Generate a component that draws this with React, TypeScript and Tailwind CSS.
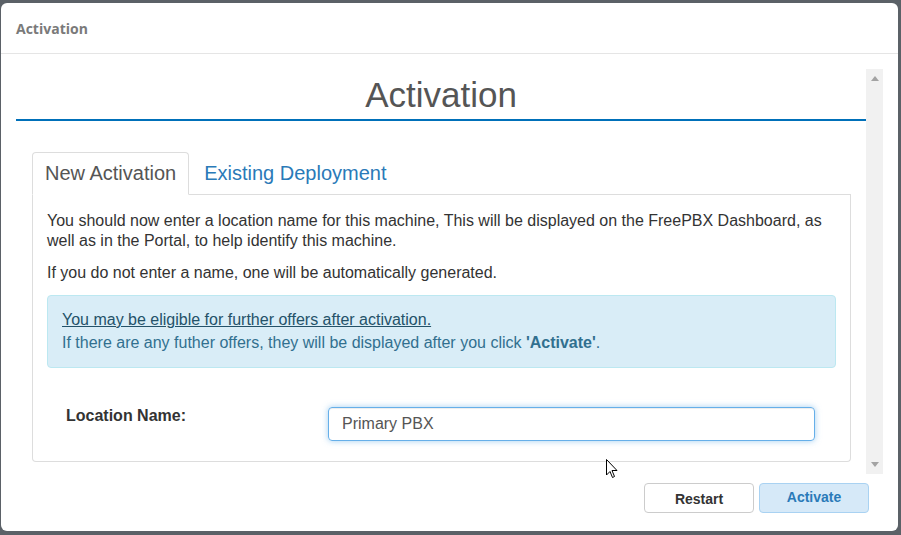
import React from "react";

export default function App() {
  return (
    <div className="relative w-[901px] h-[535px] bg-[#5b6167] pt-[3px] pl-[1px] pr-[3px] pb-[4px] overflow-hidden">
      <div className="bg-white rounded-[6px] h-full flex flex-col overflow-hidden" style={{ fontFamily: '"Liberation Sans", Arial, sans-serif' }}>
        {/* header */}
        <div className="h-[51px] shrink-0 border-b border-[#e5e5e5] px-[15px] flex items-center">
          <span className="text-[14px] font-bold text-[#7a7a7a]" style={{ fontFamily: '"Open Sans", sans-serif' }}>
            Activation
          </span>
        </div>
        {/* body */}
        <div className="px-[15px] pt-[15px] shrink-0">
          <div className="h-[405px] flex">
            <div className="flex-1 min-w-0">
              <h1 className="mt-[6px] pb-[4px] text-center text-[35px] leading-[40px] text-[#555] border-b-2 border-[#0070b9]">
                Activation
              </h1>
              <div className="mt-[31px] ml-[16px] mr-[15px]">
                <div className="flex border-b border-[#ddd]">
                  <div className="-mb-px border border-[#ddd] border-b-white rounded-t-[4px] bg-white px-[12px] pt-[6px] pb-[7px] text-[20px] leading-[28px] text-[#555]">
                    New Activation
                  </div>
                  <div className="ml-[3px] px-[12px] pt-[7px] pb-[7px] text-[20px] leading-[28px] text-[#2a7ab8]">
                    Existing Deployment
                  </div>
                </div>
                <div className="border border-t-0 border-[#ddd] rounded-b-[4px] px-[14px] pt-[16px] pb-[20px] text-[16px] leading-[20px] text-[#333]">
                  <p>
                    You should now enter a location name for this machine, This will be displayed on the FreePBX Dashboard, as well as in the Portal, to help identify this machine.
                  </p>
                  <p className="mt-[12px]">If you do not enter a name, one will be automatically generated.</p>
                  <div className="mt-[12px] bg-[#d9edf7] border border-[#bce8f1] rounded-[4px] px-[14px] pt-[12px] pb-[13px] text-[#31708f] leading-[23px]">
                    <div>
                      <span className="underline text-[#245269]">You may be eligible for further offers after activation.</span>
                    </div>
                    <div>
                      If there are any futher offers, they will be displayed after you click <b>'Activate'</b>.
                    </div>
                  </div>
                  <div className="mt-[39px] pl-[19px] pr-[21px] flex items-start">
                    <label className="w-[262px] shrink-0 font-bold leading-[18px]">Location Name:</label>
                    <div className="flex-1 h-[34px] border border-[#66afe9] rounded-[4px] px-[13px] flex items-center text-[#555] shadow-[inset_0_1px_1px_rgba(0,0,0,0.075),0_0_6px_rgba(102,175,233,0.6)]">
                      Primary PBX
                    </div>
                  </div>
                </div>
              </div>
            </div>
            {/* scrollbar */}
            <div className="w-[17px] shrink-0 bg-[#f1f1f1] flex flex-col justify-between items-center py-[7px]">
              <svg width="8" height="5" viewBox="0 0 8 5"><path d="M0 5 L4 0 L8 5 Z" fill="#a3a3a3" /></svg>
              <svg width="8" height="5" viewBox="0 0 8 5"><path d="M0 0 L8 0 L4 5 Z" fill="#a3a3a3" /></svg>
            </div>
          </div>
        </div>
        {/* footer */}
        <div className="flex justify-end gap-[5px] pt-[9px] pr-[29px]">
          <button className="w-[110px] h-[30px] border border-[#ccc] rounded-[4px] bg-white text-[14px] font-bold text-[#333] pt-[2px]">
            Restart
          </button>
          <button className="w-[110px] h-[30px] border border-[#a9d2f2] rounded-[4px] bg-[#d6e9f8] text-[14px] font-bold text-[#2a7ab8] pb-[2px]">
            Activate
          </button>
        </div>
      </div>
      {/* mouse cursor */}
      <svg className="absolute left-[606px] top-[459px]" width="13" height="20" viewBox="0 0 13 20">
        <path d="M0.5 0.5 L0.5 16 L4 12.5 L6.5 18.5 L8.5 17.5 L6 11.5 L11 11.5 Z" fill="#fff" stroke="#000" strokeWidth="1" strokeLinejoin="miter" />
      </svg>
    </div>
  );
}
